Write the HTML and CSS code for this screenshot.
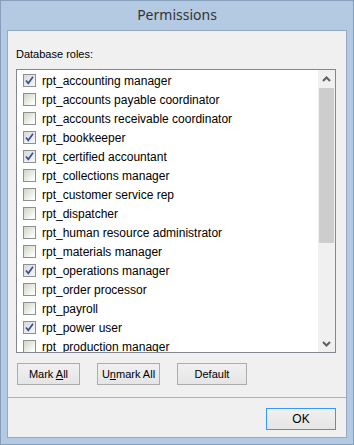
FILE: index.html
```html
<!DOCTYPE html>
<html>
<head>
<meta charset="utf-8">
<title>Permissions</title>
<link rel="stylesheet" href="styles.css">
</head>
<body>
<div class="window">
  <div class="titlebar">Permissions</div>
  <div class="client">
    <div class="label">Database roles:</div>
    <div class="listbox">
      <div class="rows">
        <div class="row"><span class="cb checked"><svg viewBox="0 0 11 11" width="11" height="11"><path d="M2 5.5 L4.3 8.3 L9 1.8" fill="none" stroke="#3b4f8c" stroke-width="1.7"/></svg></span><span class="txt">rpt_accounting manager</span></div>
        <div class="row"><span class="cb"></span><span class="txt">rpt_accounts payable coordinator</span></div>
        <div class="row"><span class="cb"></span><span class="txt">rpt_accounts receivable coordinator</span></div>
        <div class="row"><span class="cb checked"><svg viewBox="0 0 11 11" width="11" height="11"><path d="M2 5.5 L4.3 8.3 L9 1.8" fill="none" stroke="#3b4f8c" stroke-width="1.7"/></svg></span><span class="txt">rpt_bookkeeper</span></div>
        <div class="row"><span class="cb checked"><svg viewBox="0 0 11 11" width="11" height="11"><path d="M2 5.5 L4.3 8.3 L9 1.8" fill="none" stroke="#3b4f8c" stroke-width="1.7"/></svg></span><span class="txt">rpt_certified accountant</span></div>
        <div class="row"><span class="cb"></span><span class="txt">rpt_collections manager</span></div>
        <div class="row"><span class="cb"></span><span class="txt">rpt_customer service rep</span></div>
        <div class="row"><span class="cb"></span><span class="txt">rpt_dispatcher</span></div>
        <div class="row"><span class="cb"></span><span class="txt">rpt_human resource administrator</span></div>
        <div class="row"><span class="cb"></span><span class="txt">rpt_materials manager</span></div>
        <div class="row"><span class="cb checked"><svg viewBox="0 0 11 11" width="11" height="11"><path d="M2 5.5 L4.3 8.3 L9 1.8" fill="none" stroke="#3b4f8c" stroke-width="1.7"/></svg></span><span class="txt">rpt_operations manager</span></div>
        <div class="row"><span class="cb"></span><span class="txt">rpt_order processor</span></div>
        <div class="row"><span class="cb"></span><span class="txt">rpt_payroll</span></div>
        <div class="row"><span class="cb checked"><svg viewBox="0 0 11 11" width="11" height="11"><path d="M2 5.5 L4.3 8.3 L9 1.8" fill="none" stroke="#3b4f8c" stroke-width="1.7"/></svg></span><span class="txt">rpt_power user</span></div>
        <div class="row"><span class="cb"></span><span class="txt">rpt_production manager</span></div>
      </div>
      <div class="scrollbar">
        <div class="sb-btn"><svg viewBox="0 0 9 6" width="9" height="6"><path d="M1 5 L4.5 1.5 L8 5" fill="none" stroke="#606060" stroke-width="2"/></svg></div>
        <div class="sb-track">
          <div class="sb-thumb"></div>
        </div>
        <div class="sb-btn"><svg viewBox="0 0 9 6" width="9" height="6"><path d="M1 1 L4.5 4.5 L8 1" fill="none" stroke="#606060" stroke-width="2"/></svg></div>
      </div>
    </div>
    <div class="buttons">
      <div class="btn btn-mark"><span>Mark <u>A</u>ll</span></div>
      <div class="btn btn-unmark"><span>U<u>n</u>mark All</span></div>
      <div class="btn btn-default"><span>Default</span></div>
    </div>
    <div class="separator"></div>
    <div class="footer">
      <div class="btn btn-ok"><span>OK</span></div>
    </div>
  </div>
</div>
</body>
</html>
```
FILE: styles.css
```css
html, body {
  margin: 0;
  padding: 0;
  background: #b4cae2;
}
.window {
  width: 354px;
  height: 445px;
  box-sizing: border-box;
  border: 1px solid #869fbd;
  background: #b4cae2;
  display: flex;
  flex-direction: column;
}
.titlebar {
  height: 29px;
  box-sizing: border-box;
  padding-top: 4px;
  text-align: center;
  font-family: "Noto Sans", sans-serif;
  font-size: 14px;
  color: #333;
}
.client {
  margin: 0 6px 6px 6px;
  flex: 1;
  border: 1px solid #97a9c0;
  background: #f0f0f0;
  padding: 16px 10px 0 8px;
  display: flex;
  flex-direction: column;
  font-family: "Liberation Sans", Arial, sans-serif;
  color: #000;
}
.label {
  font-size: 11px;
  height: 14px;
  line-height: 14px;
  margin-bottom: 8px;
}
.listbox {
  height: 284px;
  box-sizing: border-box;
  border: 1px solid #828790;
  background: #fff;
  display: flex;
  overflow: hidden;
}
.rows {
  flex: 1;
  overflow: hidden;
}
.row {
  height: 19px;
  display: flex;
  align-items: center;
  padding-left: 6px;
}
.cb {
  width: 13px;
  height: 13px;
  box-sizing: border-box;
  border: 1px solid #8e8f8f;
  background: linear-gradient(135deg, #cfd5c6 0%, #e6e9e0 45%, #fbfbfb 80%, #ffffff 100%);
  display: flex;
  align-items: center;
  justify-content: center;
  flex: none;
  margin-top: 2px;
}
.cb.checked {
  background: linear-gradient(135deg, #d6d8dc 0%, #e8e9ec 50%, #f6f6f6 100%);
}
.txt {
  margin-left: 6px;
  font-size: 12px;
  white-space: nowrap;
  padding-top: 2px;
}
.scrollbar {
  width: 17px;
  flex: none;
  background: #f0f0f0;
  display: flex;
  flex-direction: column;
}
.sb-btn {
  height: 17px;
  display: flex;
  align-items: center;
  justify-content: center;
  flex: none;
}
.sb-track {
  flex: 1;
  padding-top: 1px;
}
.sb-thumb {
  height: 155px;
  margin: 0 1px;
  background: #cdcdcd;
}
.buttons {
  display: flex;
  margin-top: 10px;
  margin-left: 1px;
}
.btn {
  height: 22px;
  box-sizing: border-box;
  border: 1px solid #acacac;
  background: linear-gradient(#f0f0f0, #e5e5e5);
  font-family: "Liberation Sans", Arial, sans-serif;
  font-size: 11px;
  display: flex;
  align-items: center;
  justify-content: center;
  color: #000;
  white-space: pre;
}
.btn-mark { width: 63px; }
.btn-unmark { width: 63px; margin-left: 17px; }
.btn-default { width: 70px; margin-left: 17px; }
.separator {
  height: 1px;
  background: #b2b2b2;
  margin: 12px -10px 0 -8px;
}
.footer {
  display: flex;
  justify-content: flex-end;
  margin-top: 10px;
}
.btn-ok {
  width: 70px;
  border-color: #3399ff;
  font-size: 12px;
}
```
